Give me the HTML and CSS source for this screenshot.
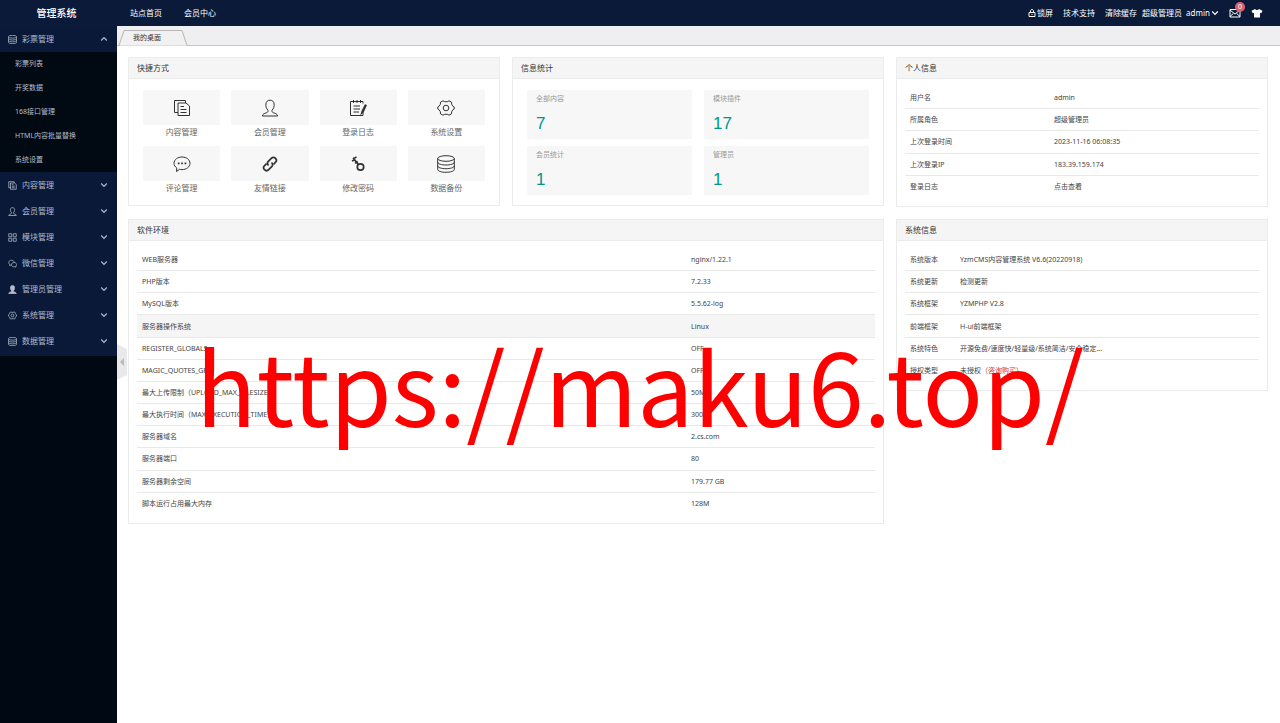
FILE: index.html
```html
<!DOCTYPE html>
<html lang="zh-CN">
<head>
    <meta charset="UTF-8">
    <meta name="viewport" content="width=device-width, initial-scale=1.0">
    <title>管理系统</title>
    <link rel="stylesheet" href="styles.css">
</head>
<body>
    <svg class="sprite" aria-hidden="true">
        <symbol id="i-copy" viewBox="0 0 18 18"><path d="M5 13.500H1.500V1.500h11V4M5 4h8l3.500 3v9.500H5zM7.500 7.500H11M7.500 10.500h6M7.500 13.500h6"/></symbol>
        <symbol id="i-user" viewBox="0 0 18 18"><path d="M7 11.300C5.300 9.500 4.700 7.500 4.900 5 5 2.500 6.800 1.200 9 1.200s4 1.300 4.100 3.800c.2 2.500-.4 4.500-2.100 6.300-.3 1.600.3 2 1.600 2.500 2.200.8 3.600 1 4 3.200H1.400c.4-2.200 1.800-2.400 4-3.200 1.300-.5 1.900-.9 1.600-2.500z"/></symbol>
        <symbol id="i-log" viewBox="0 0 18 18"><path d="M14 4.500V2.500H1.500v14H14V13M4.500 1v3M8 1v3M11.500 1v3M4.500 7H11M4.500 10H11M4.500 13H10"/><path stroke-width="1.500" d="M16.300 6l-3 6-.6 2 1.400-1.300L17 6.500z"/></symbol>
        <symbol id="i-gear" viewBox="0 0 18 18"><path d="M6 1.800l1.600.9h2.800l1.600-.9 2.500 1.400.1 2 1.300 2L17.200 8v2l-1.300.8-1.300 2-.1 2-2.500 1.400-1.600-.9H7.600l-1.600.9-2.500-1.400-.1-2-1.300-2L.8 10V8l1.300-.8 1.300-2 .1-2z"/><circle cx="9" cy="9" r="2.800"/></symbol>
        <symbol id="i-chat" viewBox="0 0 18 18"><path d="M3.500 16.500l.3-3.500C2 11.800 1 10.200 1 8.300 1 4.700 4.500 2 9 2s8 2.700 8 6.300-3.500 6.300-8 6.300c-1 0-1.700-.1-2.500-.3z"/><path class="dots" d="M4.800 7.500h1.700v1.700H4.800zM8.200 7.500h1.700v1.700H8.200zM11.600 7.500h1.700v1.700h-1.700z"/></symbol>
        <symbol id="i-link" viewBox="0 0 18 18"><g stroke-width="1.700"><path d="M7.500 10.500C6 9 6.200 7.500 7.300 6.300l3-3c1.200-1.200 3-1.200 4.200 0s1.200 2.700.1 3.900L12.500 9.300"/><path d="M10.500 7.500c1.500 1.500 1.300 3 .2 4.200l-3 3c-1.200 1.200-3 1.200-4.200 0s-1.200-2.700-.1-3.900l2.100-2.100"/></g></symbol>
        <symbol id="i-key" viewBox="0 0 18 18"><g stroke-width="1.700"><circle cx="11.500" cy="12" r="3.200"/><path d="M9.400 9.600L4 2.800M3 6l2.800-1.200M5.500 3l2-1M6 8.300l2.800-1.800"/></g></symbol>
        <symbol id="i-data" viewBox="0 0 18 18"><ellipse cx="9" cy="3.500" rx="8.300" ry="2.800"/><path d="M.7 3.500v11c0 1.600 3.700 2.800 8.300 2.800s8.300-1.200 8.300-2.800v-11M.7 7.200C.7 8.800 4.400 10 9 10s8.300-1.200 8.300-2.800M.7 10.900c0 1.600 3.700 2.800 8.300 2.800s8.300-1.200 8.300-2.800"/></symbol>
        <symbol id="i-block" viewBox="0 0 18 18"><path d="M1.500 1.500h6v6h-6zM10.500 1.500h6v6h-6zM1.500 10.500h6v6h-6zM10.500 10.500h6v6h-6z"/></symbol>
        <symbol id="i-wechat" viewBox="0 0 18 18"><path d="M6.500 12L3 13l.3-2.200C-.5 7.500 2 2.500 7 2.500c3 0 5 1.800 5.500 4M16 16l-2.200-.6C10 16.500 7 14.300 7 11.500S9.300 7 12.200 7c4.600 0 6.600 4.500 3.400 7.200z"/></symbol>
        <symbol id="i-down" viewBox="0 0 8 8"><path stroke-width="1.200" d="M1.200 2.500L4 5.300l2.800-2.800"/></symbol>
    </svg>

    <header class="header">
        <h1 class="logo">管理系统</h1>
        <nav class="top-nav">
            <a href="#">站点首页</a>
            <a href="#">会员中心</a>
        </nav>
        <div class="tools">
            <a class="tool lock" href="#"><svg class="tiny" viewBox="0 0 8 8"><path d="M1 3.500h6v4H1zM2.500 3.500V2c0-2 3-2 3 0v1.500M4 5v1"/></svg>锁屏</a>
            <a class="tool" href="#">技术支持</a>
            <a class="tool" href="#">清除缓存</a>
            <span class="account">
                <span>超级管理员</span>
                <button class="drop" type="button">admin<svg class="tiny"><use href="#i-down"/></svg></button>
            </span>
            <a class="mail" href="#" aria-label="消息"><svg viewBox="0 0 12 10"><path d="M1 1.500h10v7.500H1zM1 2l5 4 5-4M1 8.500l3.300-3M11 8.500l-3.300-3"/></svg><span class="badge">0</span></a>
            <a class="skin" href="#" aria-label="换肤"><svg viewBox="0 0 12 10"><path d="M4 1c.8 1.200 3.200 1.200 4 0l3.500 1.700-1.200 2.500L9 4.700V9.500H3V4.700l-1.300.5L.5 2.700z"/></svg></a>
        </div>
    </header>

    <div class="main">
        <aside class="sidebar">
            <nav class="menu">
                <button class="menu-item open" type="button"><svg class="ico"><use href="#i-data"/></svg>彩票管理<svg class="arrow"><use href="#i-down"/></svg></button>
                <div class="submenu">
                    <a href="#">彩票列表</a>
                    <a href="#">开奖数据</a>
                    <a href="#">168接口管理</a>
                    <a href="#">HTML内容批量替换</a>
                    <a href="#">系统设置</a>
                </div>
                <button class="menu-item" type="button"><svg class="ico"><use href="#i-copy"/></svg>内容管理<svg class="arrow"><use href="#i-down"/></svg></button>
                <button class="menu-item" type="button"><svg class="ico"><use href="#i-user"/></svg>会员管理<svg class="arrow"><use href="#i-down"/></svg></button>
                <button class="menu-item" type="button"><svg class="ico"><use href="#i-block"/></svg>模块管理<svg class="arrow"><use href="#i-down"/></svg></button>
                <button class="menu-item" type="button"><svg class="ico"><use href="#i-wechat"/></svg>微信管理<svg class="arrow"><use href="#i-down"/></svg></button>
                <button class="menu-item" type="button"><svg class="ico solid"><use href="#i-user"/></svg>管理员管理<svg class="arrow"><use href="#i-down"/></svg></button>
                <button class="menu-item" type="button"><svg class="ico"><use href="#i-gear"/></svg>系统管理<svg class="arrow"><use href="#i-down"/></svg></button>
                <button class="menu-item" type="button"><svg class="ico"><use href="#i-data"/></svg>数据管理<svg class="arrow"><use href="#i-down"/></svg></button>
            </nav>
            <button class="fold" type="button" aria-label="收起菜单"><svg viewBox="0 0 10 36"><path class="fold-bg" d="M0 0l10 5v26L0 36z"/><path class="fold-arrow" d="M7 14v8l-4-4z"/></svg></button>
        </aside>

        <div class="content">
            <div class="tabs">
                <a class="tab" href="#"><svg viewBox="0 0 70 16" preserveAspectRatio="none"><path d="M0 15.500h1L6 .500h58l5 15h1"/></svg><span>我的桌面</span></a>
            </div>

            <main class="desk">
                <section class="card">
                    <h2>快捷方式</h2>
                    <div class="shortcuts">
                        <a href="#"><span class="pic"><svg><use href="#i-copy"/></svg></span>内容管理</a>
                        <a href="#"><span class="pic"><svg><use href="#i-user"/></svg></span>会员管理</a>
                        <a href="#"><span class="pic"><svg><use href="#i-log"/></svg></span>登录日志</a>
                        <a href="#"><span class="pic"><svg><use href="#i-gear"/></svg></span>系统设置</a>
                        <a href="#"><span class="pic"><svg><use href="#i-chat"/></svg></span>评论管理</a>
                        <a href="#"><span class="pic"><svg><use href="#i-link"/></svg></span>友情链接</a>
                        <a href="#"><span class="pic"><svg><use href="#i-key"/></svg></span>修改密码</a>
                        <a href="#"><span class="pic"><svg><use href="#i-data"/></svg></span>数据备份</a>
                    </div>
                </section>

                <section class="card">
                    <h2>信息统计</h2>
                    <div class="stats">
                        <div class="stat"><span>全部内容</span><b>7</b></div>
                        <div class="stat"><span>模块插件</span><b>17</b></div>
                        <div class="stat"><span>会员统计</span><b>1</b></div>
                        <div class="stat"><span>管理员</span><b>1</b></div>
                    </div>
                </section>

                <section class="card">
                    <h2>个人信息</h2>
                    <table class="info personal">
                        <tr><th>用户名</th><td>admin</td></tr>
                        <tr><th>所属角色</th><td>超级管理员</td></tr>
                        <tr><th>上次登录时间</th><td>2023-11-16 06:08:35</td></tr>
                        <tr><th>上次登录IP</th><td>183.39.159.174</td></tr>
                        <tr><th>登录日志</th><td><a href="#">点击查看</a></td></tr>
                    </table>
                </section>

                <section class="card wide">
                    <h2>软件环境</h2>
                    <table class="info env">
                        <tr><th>WEB服务器</th><td>nginx/1.22.1</td></tr>
                        <tr><th>PHP版本</th><td>7.2.33</td></tr>
                        <tr><th>MySQL版本</th><td>5.5.62-log</td></tr>
                        <tr class="active"><th>服务器操作系统</th><td>Linux</td></tr>
                        <tr><th>REGISTER_GLOBALS</th><td>OFF</td></tr>
                        <tr><th>MAGIC_QUOTES_GPC</th><td>OFF</td></tr>
                        <tr><th>最大上传限制（UPLOAD_MAX_FILESIZE）</th><td>50M</td></tr>
                        <tr><th>最大执行时间（MAX_EXECUTION_TIME）</th><td>300</td></tr>
                        <tr><th>服务器域名</th><td>2.cs.com</td></tr>
                        <tr><th>服务器端口</th><td>80</td></tr>
                        <tr><th>服务器剩余空间</th><td>179.77 GB</td></tr>
                        <tr><th>脚本运行占用最大内存</th><td>128M</td></tr>
                    </table>
                </section>

                <section class="card">
                    <h2>系统信息</h2>
                    <table class="info system">
                        <tr><th>系统版本</th><td>YzmCMS内容管理系统 V6.6(20220918)</td></tr>
                        <tr><th>系统更新</th><td><a href="#">检测更新</a></td></tr>
                        <tr><th>系统框架</th><td>YZMPHP V2.8</td></tr>
                        <tr><th>前端框架</th><td>H-ui前端框架</td></tr>
                        <tr><th>系统特色</th><td>开源免费/速度快/轻量级/系统简洁/安全稳定...</td></tr>
                        <tr><th>授权类型</th><td>未授权<a class="buy" href="#">（咨询购买）</a></td></tr>
                    </table>
                </section>
            </main>
        </div>
    </div>

    <div class="watermark">https://maku6.top/</div>
</body>
</html>
```
FILE: styles.css
```css
* {
    box-sizing: border-box;
}

body {
    margin: 0;
    min-height: 100vh;
    display: flex;
    flex-direction: column;
    background: #fff;
    color: #444;
    font: 7px/14px "Noto Sans", "Noto Sans CJK SC", sans-serif;
}

a {
    color: inherit;
    text-decoration: none;
}

button {
    padding: 0;
    border: 0;
    background: none;
    color: inherit;
    font: inherit;
    cursor: pointer;
}

svg {
    display: block;
    fill: none;
    stroke: currentColor;
}

.sprite {
    position: absolute;
    width: 0;
    height: 0;
}

/* header */
.header {
    display: flex;
    align-items: center;
    height: 26px;
    background: #0a1a38;
    color: #fff;
    font-size: 8px;
}

.logo {
    width: 117px;
    margin: 0;
    padding-right: 4px;
    text-align: center;
    font-size: 10px;
    font-weight: 500;
}

.top-nav {
    display: flex;
    gap: 22px;
    padding-left: 13px;
}

.tools {
    display: flex;
    align-items: center;
    gap: 10px;
    margin-left: auto;
    padding-right: 17px;
}

.lock,
.drop {
    display: flex;
    align-items: center;
    gap: 1px;
}

.account {
    display: flex;
    gap: 4px;
    margin-left: -5px;
}

.tiny {
    width: 8px;
    height: 8px;
}

.mail {
    position: relative;
}

.mail svg,
.skin svg {
    width: 12px;
    height: 10px;
}

.skin svg {
    fill: currentColor;
    stroke: none;
}

.badge {
    position: absolute;
    top: -6px;
    right: -4px;
    width: 10px;
    height: 10px;
    border-radius: 50%;
    background: #d9626c;
    color: #fff;
    font-size: 7px;
    line-height: 10px;
    text-align: center;
}

/* sidebar */
.main {
    flex: 1;
    display: flex;
}

.sidebar {
    position: relative;
    width: 117px;
    background: #000913;
    color: #b4bccb;
}

.menu {
    padding-bottom: 2px;
    background: #0a1938;
}

.menu-item {
    display: flex;
    align-items: center;
    gap: 5px;
    width: 100%;
    height: 26px;
    padding: 0 9px 0 8px;
    font-size: 8px;
}

.ico {
    width: 9px;
    height: 9px;
    stroke-width: 1.500;
}

.solid {
    fill: currentColor;
}

.arrow {
    width: 8px;
    height: 8px;
    margin-left: auto;
}

.open .arrow {
    transform: rotate(180deg);
}

.submenu {
    background: #010912;
}

.submenu a {
    display: block;
    padding-left: 15px;
    line-height: 24px;
}

.fold {
    position: absolute;
    top: 318px;
    left: 100%;
    width: 10px;
    height: 36px;
}

.fold-bg {
    fill: #e9e9e9;
    stroke: none;
}

.fold-arrow {
    fill: #bbb;
    stroke: none;
}

/* tabs */
.content {
    flex: 1;
    min-width: 0;
}

.tabs {
    display: flex;
    align-items: flex-end;
    height: 20px;
    padding-left: 1px;
    background: #efeef0;
    border-bottom: 1px solid #c8c8c8;
}

.tab {
    position: relative;
    width: 70px;
    height: 16px;
    margin-bottom: -1px;
    padding-left: 15px;
    line-height: 16px;
    color: #333;
}

.tab svg {
    position: absolute;
    inset: 0;
    width: 100%;
    height: 100%;
    fill: #f1f1f1;
    stroke: #b5b5b5;
}

.tab span {
    position: relative;
}

/* cards */
.desk {
    display: grid;
    grid-template-columns: repeat(3, minmax(0, 1fr));
    gap: 12px;
    align-items: start;
    padding: 11px 12px 11px 11px;
}

.card {
    border: 1px solid #ebebeb;
}

.wide {
    grid-column: span 2;
}

.card h2 {
    margin: 0;
    padding: 0 8px;
    background: #f5f5f5;
    border-bottom: 1px solid #ebebeb;
    color: #333;
    font-size: 8px;
    font-weight: 400;
    line-height: 20px;
}

.shortcuts {
    display: grid;
    grid-template-columns: repeat(4, 1fr);
    gap: 8px 11px;
    padding: 11px 14px;
}

.shortcuts a {
    color: #666;
    font-size: 8px;
    line-height: 13px;
    text-align: center;
}

.pic {
    display: flex;
    align-items: center;
    justify-content: center;
    height: 35px;
    background: #f7f7f7;
    color: #333;
}

.pic svg {
    width: 18px;
    height: 18px;
}

.dots {
    fill: currentColor;
    stroke: none;
}

.stats {
    display: grid;
    grid-template-columns: 1fr 1fr;
    gap: 7px 12px;
    padding: 11px 14px 10px;
}

.stat {
    height: 49px;
    padding: 2px 9px;
    background: #f7f7f7;
}

.stat span {
    display: block;
    color: #999;
}

.stat b {
    display: block;
    margin-top: 7px;
    color: #009688;
    font: 17px/22px "Liberation Sans", sans-serif;
}

/* tables */
.info {
    width: calc(100% - 16px);
    margin: 8px;
    border-collapse: separate;
    border-spacing: 0;
    table-layout: fixed;
}

.info th,
.info td {
    padding: 4px 5px 3px;
    border-bottom: 1px solid #e8e8e8;
    font-weight: 400;
    text-align: left;
    white-space: nowrap;
}

.info tr:last-child th,
.info tr:last-child td {
    border-bottom-color: transparent;
}

.active {
    background: #f5f5f5;
}

.personal {
    height: 111px;
}

.personal th {
    width: 144px;
}

.env {
    height: 266px;
}

.env td {
    width: 189px;
}

.system {
    height: 133px;
}

.system th {
    width: 50px;
}

.buy {
    color: #d9302c;
}

.watermark {
    position: absolute;
    top: 334px;
    left: 0;
    right: 0;
    color: #f00;
    font: 100px/100px "Noto Sans CJK SC", sans-serif;
    text-align: center;
    pointer-events: none;
}
```
